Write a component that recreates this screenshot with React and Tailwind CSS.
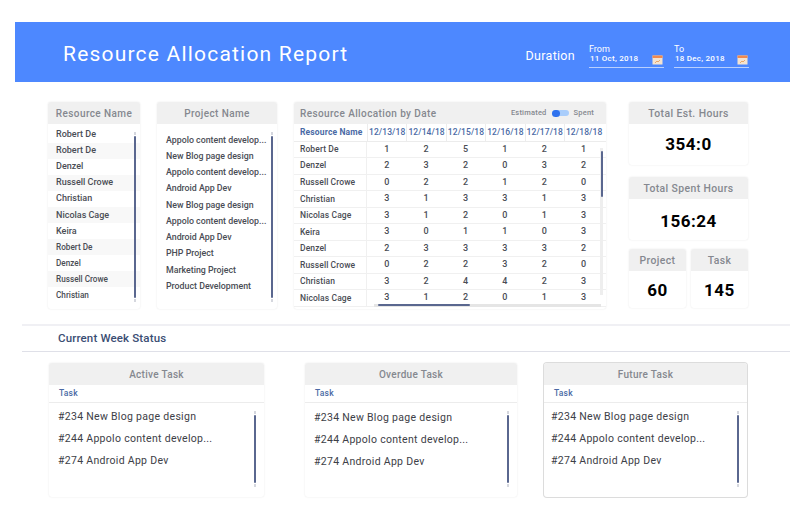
const resources = ['Robert De', 'Robert De', 'Denzel', 'Russell Crowe', 'Christian', 'Nicolas Cage', 'Keira'];
const resourcesSmall = ['Robert De', 'Denzel', 'Russell Crowe', 'Christian'];
const projects = [
  'Appolo content develop...',
  'New Blog page design',
  'Appolo content develop...',
  'Android App Dev',
  'New Blog page design',
  'Appolo content develop...',
  'Android App Dev',
  'PHP Project',
  'Marketing Project',
  'Product Development',
];
const dates = ['12/13/18', '12/14/18', '12/15/18', '12/16/18', '12/17/18', '12/18/18'];
const rows = [
  ['Robert De', 1, 2, 5, 1, 2, 1],
  ['Denzel', 2, 3, 2, 0, 3, 2],
  ['Russell Crowe', 0, 2, 2, 1, 2, 0],
  ['Christian', 3, 1, 3, 3, 1, 3],
  ['Nicolas Cage', 3, 1, 2, 0, 1, 3],
  ['Keira', 3, 0, 1, 1, 0, 3],
  ['Denzel', 2, 3, 3, 3, 3, 2],
  ['Russell Crowe', 0, 2, 2, 3, 2, 0],
  ['Christian', 3, 2, 4, 4, 2, 3],
  ['Nicolas Cage', 3, 1, 2, 0, 1, 3],
];
const tasks = ['#234 New Blog page design', '#244 Appolo content develop...', '#274 Android App Dev'];

function CalendarIcon() {
  return (
    <svg width="11" height="10" viewBox="0 0 11 10" className="shrink-0">
      <rect x="0.5" y="0.5" width="10" height="9" fill="#f5e3cf" />
      <rect x="0.5" y="0.5" width="10" height="2.5" fill="#f0894f" />
      <path d="M3 8l2-2 1 1 2-2" stroke="#e9a86b" strokeWidth="1" fill="none" />
    </svg>
  );
}

function DateField({ label, value, className }) {
  return (
    <div className={`w-[75px] border-b border-[#b9d0ff] pb-[2px] ${className}`}>
      <div className="text-[9px] leading-[9px] text-white">{label}</div>
      <div className="flex items-center justify-between pr-[1px] pl-[1px] mt-[-1px]">
        <span className="text-[8px] leading-[10px] font-medium tracking-[0.25px] text-white">{value}</span>
        <span className="mt-[2px]"><CalendarIcon /></span>
      </div>
    </div>
  );
}

function VScroll({ className }) {
  return (
    <div className={`absolute w-[2px] flex flex-col items-center ${className}`}>
      <div className="h-[3px] w-[2px] bg-[#d5d7de]" />
      <div className="flex-1 my-[1px] w-[2px] rounded-full bg-[#5a678f]" />
      <div className="h-[3px] w-[2px] bg-[#d5d7de]" />
    </div>
  );
}

function Card({ title, className, titleClass = 'text-[10px]', children }) {
  return (
    <div className={`rounded-[3px] bg-white shadow-[0_0_2px_rgba(0,0,0,0.1)] overflow-hidden ${className}`}>
      <div className={`h-[22px] pt-[1px] bg-[#f0f0f0] flex items-center justify-center font-medium tracking-[0.4px] text-[#85888f] ${titleClass}`}>
        {title}
      </div>
      {children}
    </div>
  );
}

function StatCard({ title, value, className, valueClass }) {
  return (
    <Card title={title} className={className} titleClass="text-[10.4px]">
      <div className={`flex justify-center font-bold text-black ${valueClass}`}>{value}</div>
    </Card>
  );
}

function TaskCard({ title, className, frame, itemsClass }) {
  return (
    <div className={`relative rounded-[3px] bg-white h-[134px] ${frame} ${className}`}>
      <div className="h-[22px] rounded-t-[3px] bg-[#f0f0f0] flex items-center justify-center text-[10px] font-medium tracking-[0.3px] text-[#85888f]">
        {title}
      </div>
      <div className="h-[18px] border-b border-[#ececec] pl-[10px] flex items-center text-[8.5px] font-medium tracking-[0.2px] text-[#4a6aa5]">
        Task
      </div>
      <div className={`flex flex-col ${itemsClass}`}>
        {tasks.map((t) => (
          <div key={t} className="h-[22px] flex items-center text-[10.5px] tracking-[0.3px] text-[#3d4047]">{t}</div>
        ))}
      </div>
      <VScroll className="right-[8px] top-[48px] bottom-[10px]" />
    </div>
  );
}

export default function App() {
  return (
    <div className="w-[805px] h-[520px] bg-white overflow-hidden pt-[22px] font-['Roboto',sans-serif]">
      {/* Banner */}
      <div className="ml-[15px] w-[775px] h-[60px] bg-[#4d88ff] flex items-center text-white">
        <h1 className="ml-[48px] pt-[6px] text-[21px] font-normal tracking-[1.2px]">Resource Allocation Report</h1>
        <div className="ml-auto mr-[41px] pt-[9px] flex items-center">
          <span className="text-[12.5px] tracking-[0.3px] mr-[14px]">Duration</span>
          <DateField label="From" value="11 Oct, 2018" className="mr-[10px]" />
          <DateField label="To" value="18 Dec, 2018" />
        </div>
      </div>

      {/* Top panels */}
      <div className="mt-[20px] ml-[48px] flex items-start">
        <Card title="Resource Name" className="relative w-[92px] h-[207px] mr-[17px]">
          <div className="pt-[3px] flex flex-col">
            {resources.map((r, i) => (
              <div key={i} className={`h-[16.05px] pl-[8px] flex items-center text-[9px] font-medium text-[#4a4d55] ${i % 2 === 1 ? 'bg-[#f8f8f8]' : ''}`}>{r}</div>
            ))}
            {resourcesSmall.map((r, i) => (
              <div key={i} className={`h-[16.05px] pl-[8px] flex items-center text-[8.2px] font-medium text-[#4a4d55] ${i % 2 === 0 ? 'bg-[#f8f8f8]' : ''}`}>{r}</div>
            ))}
          </div>
          <VScroll className="right-[4px] top-[30px] bottom-[7px]" />
        </Card>

        <Card title="Project Name" className="relative w-[120px] h-[207px] mr-[17px]">
          <div className="pt-[8px] pl-[9px] flex flex-col">
            {projects.map((p, i) => (
              <div key={i} className="h-[16.25px] flex items-center whitespace-nowrap text-[8.8px] font-medium text-[#4a4d55]">{p}</div>
            ))}
          </div>
          <VScroll className="right-[4px] top-[30px] bottom-[7px]" />
        </Card>

        <div className="relative w-[312px] h-[207px] mr-[23px] rounded-[3px] bg-white shadow-[0_0_2px_rgba(0,0,0,0.1)] overflow-hidden">
          <div className="h-[22px] bg-[#f0f0f0] flex items-center pl-[6px] pr-[12px]">
            <span className="text-[10px] font-medium tracking-[0.4px] text-[#85888f]">Resource Allocation by Date</span>
            <span className="ml-auto text-[7.5px] font-medium tracking-[0.2px] text-[#85888f]">Estimated</span>
            <span className="mx-[5px] w-[17px] h-[6px] rounded-full bg-[#a9cdfb] relative">
              <span className="absolute left-0 top-[-0.5px] w-[8px] h-[7px] rounded-full bg-[#2f72ee]" />
            </span>
            <span className="text-[7.5px] font-medium tracking-[0.2px] text-[#85888f]">Spent</span>
          </div>
          <div className="grid grid-cols-[73px_repeat(6,39.4px)] h-[17.5px] border-b border-[#ececec]">
            <div className="pl-[6px] flex items-center whitespace-nowrap text-[8.5px] font-bold tracking-[0.15px] text-[#4a6aa5]">Resource Name</div>
            {dates.map((d) => (
              <div key={d} className="flex items-center justify-center border-l border-[#ececec] text-[8.5px] font-medium tracking-[0.1px] text-[#4a6aa5]">{d}</div>
            ))}
          </div>
          {rows.map((row, i) => (
            <div key={i} className="grid grid-cols-[73px_repeat(6,39.4px)] h-[16.55px] border-b border-[#f0f0f0] last:border-b-0">
              <div className="pl-[6px] flex items-center border-r border-[#f0f0f0] whitespace-nowrap text-[8.5px] font-medium tracking-[0.1px] text-[#4a4d55]">{row[0]}</div>
              {row.slice(1).map((v, j) => (
                <div key={j} className="flex items-center justify-center text-[9px] font-medium text-[#4a4d55]">{v}</div>
              ))}
            </div>
          ))}
          {/* vertical scrollbar */}
          <div className="absolute right-[3px] top-[46px] bottom-[14px] w-[3px] bg-[#eeeeee]">
            <div className="mt-[3px] h-[46px] w-[2px] mx-auto rounded-full bg-[#5a678f]" />
          </div>
          {/* horizontal scrollbar */}
          <div className="absolute left-[80px] right-[5px] bottom-[2px] h-[3px] bg-[#e5e5e5]">
            <div className="ml-[4px] w-[92px] h-[2px] rounded-full bg-[#5a678f]" />
          </div>
        </div>

        <div className="w-[119px] flex flex-col">
          <StatCard title="Total Est. Hours" className="h-[63px] mb-[12px]" valueClass="pt-[8px] text-[17px] tracking-[0.5px]" value="354:0" />
          <StatCard title="Total Spent Hours" className="h-[63px] mb-[9px]" valueClass="pt-[10px] text-[17px] tracking-[0.5px]" value="156:24" />
          <div className="flex justify-between">
            <StatCard title="Project" className="w-[57px] h-[59px]" valueClass="pt-[7px] text-[17px] tracking-[0.5px]" value="60" />
            <StatCard title="Task" className="w-[57px] h-[59px]" valueClass="pt-[7px] text-[17px] tracking-[0.5px]" value="145" />
          </div>
        </div>
      </div>

      {/* Current week */}
      <div className="mt-[15px] ml-[22px] w-[768px] h-[28px] border-t-2 border-b border-t-[#f0f0f4] border-b-[#dfe0e8] flex items-center pl-[36px]">
        <h2 className="text-[11.5px] font-medium tracking-[0.15px] text-[#3a4d73]">Current Week Status</h2>
      </div>

      <div className="mt-[11px] ml-[49px] flex items-start">
        <TaskCard title="Active Task" className="w-[215px] mr-[41px]" frame="shadow-[0_0_2px_rgba(0,0,0,0.1)]" itemsClass="pt-[3px] pl-[9px]" />
        <TaskCard title="Overdue Task" className="w-[212px] mr-[27px]" frame="shadow-[0_0_2px_rgba(0,0,0,0.1)]" itemsClass="pt-[4px] pl-[9px]" />
        <TaskCard title="Future Task" className="w-[203px]" frame="shadow-[0_0_0_1px_#dcdcdc]" itemsClass="pt-[3px] pl-[7px]" />
      </div>
    </div>
  );
}
